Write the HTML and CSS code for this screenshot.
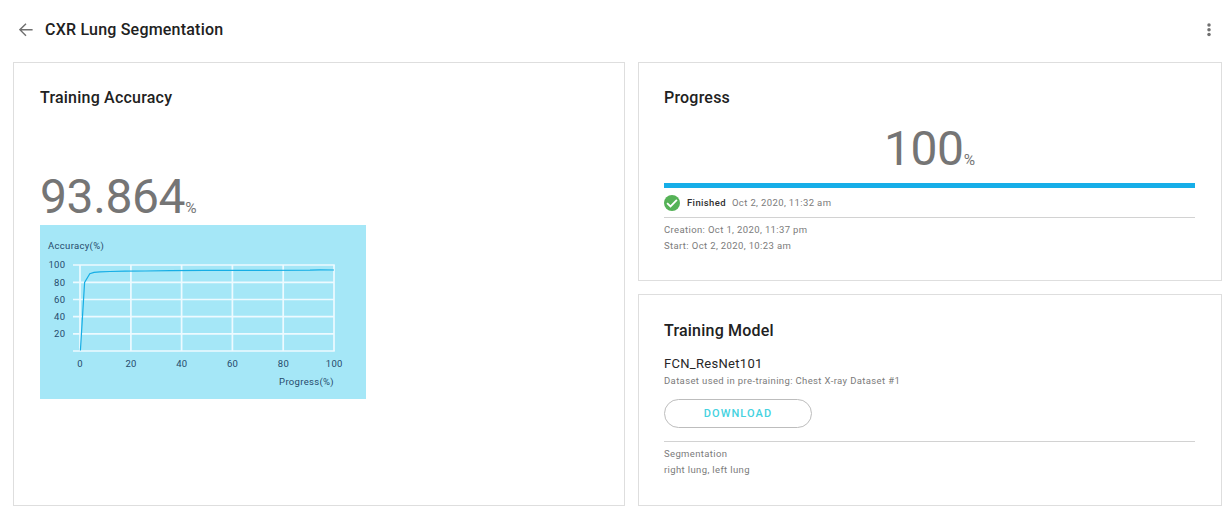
FILE: index.html
```html
<!DOCTYPE html>
<html lang="en">
<head>
<meta charset="utf-8">
<title>CXR Lung Segmentation</title>
<link rel="stylesheet" href="styles.css">
</head>
<body>
<header class="topbar">
  <svg class="back" viewBox="0 0 14 14"><path d="M13.6 6.7H1.2M7 .7.9 6.7 7 12.7"/></svg>
  <h1 class="page-title">CXR Lung Segmentation</h1>
  <svg class="more" viewBox="0 0 4 14"><circle cx="2" cy="2" r="1.75"/><circle cx="2" cy="6.7" r="1.75"/><circle cx="2" cy="11.4" r="1.75"/></svg>
</header>
<main class="board">
  <section class="card accuracy">
    <h2 class="card-title">Training Accuracy</h2>
    <div class="figure">93.864<span class="unit">%</span></div>
    <svg class="chart" viewBox="0 0 326 174">
      <g class="grid">
        <path d="M33 40H294.8M33 57.3H294M33 74.5H294M33 91.7H294M33 108.9H294M33 126H294.8"/>
        <path d="M40 40V126M90.9 40V126M141.6 40V126M192.4 40V126M243.2 40V126M294 40V126"/>
      </g>
      <path class="curve" d="M40.4 125.5 44.6 57.5 49.8 48.8 54 47.4 60 46.8 70 46.5 85 46.2 105 46 130 45.6 165 45.4 220 45.3 270 45.2 280 44.9 294 45"/>
      <g class="label">
        <text x="8" y="24">Accuracy(%)</text>
        <g class="end">
          <text x="25.4" y="43.2">100</text><text x="25.4" y="61">80</text><text x="25.4" y="78">60</text><text x="25.4" y="95">40</text><text x="25.4" y="112.2">20</text>
          <text x="294" y="160">Progress(%)</text>
        </g>
        <g class="middle">
          <text x="40.1" y="142">0</text><text x="91.1" y="142">20</text><text x="141.8" y="142">40</text><text x="192.6" y="142">60</text><text x="243.4" y="142">80</text><text x="294.3" y="142">100</text>
        </g>
      </g>
    </svg>
  </section>
  <div class="side">
    <section class="card progress">
      <h2 class="card-title">Progress</h2>
      <div class="figure centered">100<span class="unit">%</span></div>
      <div class="bar"></div>
      <div class="status">
        <svg class="check" viewBox="0 0 16 16"><circle cx="8" cy="8" r="8"/><path d="m3.1 8.2 3.4 3.3 6.4-6.6"/></svg>
        <strong class="state">Finished</strong>
        <span>Oct 2, 2020, 11:32 am</span>
      </div>
      <div class="details">
        <p>Creation: Oct 1, 2020, 11:37 pm</p>
        <p>Start: Oct 2, 2020, 10:23 am</p>
      </div>
    </section>
    <section class="card model">
      <h2 class="card-title">Training Model</h2>
      <p class="model-name">FCN_ResNet101</p>
      <p class="dataset">Dataset used in pre-training: Chest X-ray Dataset #1</p>
      <button class="download">DOWNLOAD</button>
      <div class="details">
        <p>Segmentation</p>
        <p>right lung, left lung</p>
      </div>
    </section>
  </div>
</main>
</body>
</html>
```
FILE: styles.css
```css
* { box-sizing: border-box; margin: 0; padding: 0; }
body {
  width: 1229px;
  height: 512px;
  overflow: hidden;
  background: #fff;
  font-family: Roboto, sans-serif;
  font-size: 9.5px;
  letter-spacing: .37px;
  color: #7b7b7b;
}
.topbar {
  display: flex;
  align-items: center;
  height: 62px;
  padding: 0 18px 3px 19px;
}
.back { width: 14px; height: 14px; fill: none; stroke: #707070; stroke-width: 1.4; }
.page-title { margin-left: 12px; }
.more { width: 4px; height: 14px; margin-left: auto; fill: #707070; }
.page-title, .card-title {
  font-size: 16px;
  font-weight: 500;
  line-height: 20px;
  letter-spacing: .21px;
  color: #212121;
}
.board {
  display: grid;
  grid-template-columns: 612px 584px;
  gap: 13px;
  height: 444px;
  padding-left: 13px;
}
.side { display: grid; grid-template-rows: 219px 212px; gap: 13px; }
.card { border: 1px solid #dedede; padding: 25px 26px 0 25px; }
.accuracy { padding-left: 26px; }
.figure {
  height: 56px;
  font-size: 48px;
  line-height: 56px;
  letter-spacing: -.4px;
  color: #757575;
  white-space: nowrap;
}
.unit { font-size: 15.5px; letter-spacing: 0; }
.accuracy .figure { margin-top: 61px; }
.centered { margin-top: 13px; text-align: center; }
.chart { display: block; width: 326px; height: 174px; background: #a5e7f7; }
.grid { fill: none; stroke: #edfaff; stroke-width: 1.7; }
.curve { fill: none; stroke: #16aee5; stroke-width: 1.2; }
.label { font-size: 9.5px; letter-spacing: .32px; fill: #254a6b; }
.end { text-anchor: end; }
.middle { text-anchor: middle; }
.bar { height: 5px; margin-top: 6px; background: #16aee8; }
.status {
  display: flex;
  align-items: center;
  height: 30px;
  border-bottom: 1px solid #d2d2d2;
}
.check { width: 16px; height: 16px; margin-right: 7px; fill: #55b257; }
.check path { fill: none; stroke: #fff; stroke-width: 1.8; }
.state { margin-right: 6px; font-weight: 500; color: #303030; }
.details { padding-top: 4px; line-height: 16px; }
.model .card-title { margin-top: 1px; }
.model-name { margin-top: 15px; font-size: 13px; line-height: 16px; letter-spacing: .3px; color: #272727; }
.dataset { margin-top: 1px; line-height: 16px; }
.download {
  display: block;
  width: 148px;
  height: 29px;
  margin-top: 10px;
  border: 1px solid #bdbdbd;
  border-radius: 15px;
  background: #fff;
  font: 500 11px Roboto, sans-serif;
  letter-spacing: 1.1px;
  color: #45d2df;
}
.model .details { margin-top: 13px; border-top: 1px solid #d2d2d2; }
```
